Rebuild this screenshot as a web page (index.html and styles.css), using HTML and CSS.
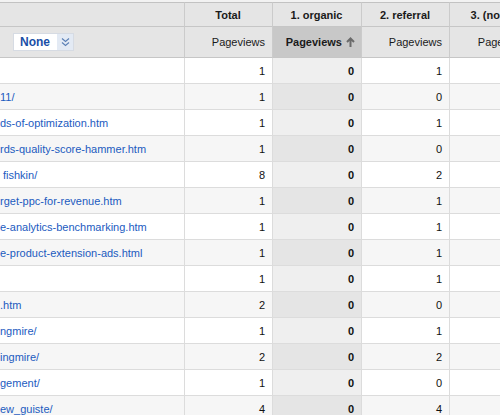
FILE: index.html
```html
<!DOCTYPE html>
<html>
<head>
<meta charset="utf-8">
<link rel="stylesheet" href="styles.css">
</head>
<body>
<div class="wrap">
<table class="grid">
  <colgroup>
    <col class="c-dim"><col class="c-num"><col class="c-num2"><col class="c-num"><col class="c-num2">
  </colgroup>
  <thead>
    <tr class="h1">
      <th class="dim"></th>
      <th>Total</th>
      <th>1. organic</th>
      <th>2. referral</th>
      <th>3. (none)</th>
    </tr>
    <tr class="h2">
      <th class="dim">
        <span class="select"><span class="select-label">None</span><span class="select-btn"><svg width="9" height="10" viewBox="0 0 9 10"><path d="M1 1.5 L4.5 4.5 L8 1.5 M1 5.5 L4.5 8.5 L8 5.5" fill="none" stroke="#5a7fb5" stroke-width="1.1"/></svg></span></span>
      </th>
      <th class="metric">Pageviews</th>
      <th class="metric sorted">Pageviews <svg class="arrow" width="9" height="10" viewBox="0 0 9 10"><path d="M4.5 1.5 V10 M1 5 L4.5 1.5 L8 5" fill="none" stroke="#6a6a6a" stroke-width="2"/></svg></th>
      <th class="metric">Pageviews</th>
      <th class="metric">Pageviews</th>
    </tr>
  </thead>
  <tbody>
    <tr><td class="dim"><a class="link" href="#"></a></td><td>1</td><td class="s">0</td><td>1</td><td>0</td></tr>
    <tr><td class="dim"><a class="link" href="#">11/</a></td><td>1</td><td class="s">0</td><td>0</td><td>1</td></tr>
    <tr><td class="dim"><a class="link" href="#">ds-of-optimization.htm</a></td><td>1</td><td class="s">0</td><td>1</td><td>0</td></tr>
    <tr><td class="dim"><a class="link" href="#">rds-quality-score-hammer.htm</a></td><td>1</td><td class="s">0</td><td>0</td><td>1</td></tr>
    <tr><td class="dim"><a class="link indent" href="#">fishkin/</a></td><td>8</td><td class="s">0</td><td>2</td><td>6</td></tr>
    <tr><td class="dim"><a class="link" href="#">rget-ppc-for-revenue.htm</a></td><td>1</td><td class="s">0</td><td>1</td><td>0</td></tr>
    <tr><td class="dim"><a class="link" href="#">e-analytics-benchmarking.htm</a></td><td>1</td><td class="s">0</td><td>1</td><td>0</td></tr>
    <tr><td class="dim"><a class="link" href="#">e-product-extension-ads.html</a></td><td>1</td><td class="s">0</td><td>1</td><td>0</td></tr>
    <tr><td class="dim"><a class="link" href="#"></a></td><td>1</td><td class="s">0</td><td>1</td><td>0</td></tr>
    <tr><td class="dim"><a class="link" href="#">.htm</a></td><td>2</td><td class="s">0</td><td>0</td><td>2</td></tr>
    <tr><td class="dim"><a class="link" href="#">ngmire/</a></td><td>1</td><td class="s">0</td><td>1</td><td>0</td></tr>
    <tr><td class="dim"><a class="link" href="#">ingmire/</a></td><td>2</td><td class="s">0</td><td>2</td><td>0</td></tr>
    <tr><td class="dim"><a class="link" href="#">gement/</a></td><td>1</td><td class="s">0</td><td>0</td><td>1</td></tr>
    <tr><td class="dim"><a class="link" href="#">ew_guiste/</a></td><td>4</td><td class="s">0</td><td>4</td><td>0</td></tr>
  </tbody>
</table>
</div>
</body>
</html>
```

FILE: styles.css
```css
html, body {
  margin: 0;
  padding: 0;
  background: #f2f2f2;
  overflow: hidden;
}
.wrap {
  width: 500px;
  height: 415px;
  overflow: hidden;
  padding-top: 2px;
}
.grid {
  table-layout: fixed;
  width: 538px;
  border-collapse: separate;
  border-spacing: 0;
  font-family: "Liberation Sans", Arial, sans-serif;
  font-size: 11px;
  color: #222;
}
.c-dim { width: 184px; }
.c-num { width: 88px; }
.c-num2 { width: 89px; }

.grid th, .grid td {
  box-sizing: border-box;
  padding: 0 7px 0 6px;
  white-space: nowrap;
  overflow: hidden;
  border-bottom: 1px solid #dcdcdc;
  border-left: 1px solid #dcdcdc;
}
.grid th.dim, .grid td.dim {
  border-left: none;
  padding-left: 0;
  text-align: left;
}
.grid thead th {
  background: #e5e5e5;
  border-left-color: #cbcbcb;
  border-bottom-color: #c6c6c6;
}
.h1 th {
  height: 25px;
  border-top: 1px solid #c2c2c2;
  font-weight: bold;
  text-align: center;
  color: #1a1a1a;
}
.h2 th {
  height: 31px;
  font-weight: normal;
  text-align: right;
}
.h2 th.metric {
  color: #1a1a1a;
}
.h2 th.sorted {
  background: #c8c8c8;
  font-weight: bold;
  padding-right: 6px;
}
.arrow {
  vertical-align: -1px;
  margin-left: 1px;
}
.select {
  display: inline-flex;
  align-items: stretch;
  margin-left: 13px;
  height: 18px;
  box-sizing: border-box;
  border: 1px solid #d6dbe3;
  background: #fff;
  vertical-align: middle;
}
.select-label {
  display: flex;
  align-items: center;
  padding: 0 7px 0 6px;
  font-size: 12px;
  font-weight: bold;
  color: #1a4fa6;
}
.select-btn {
  display: flex;
  align-items: center;
  justify-content: center;
  width: 16px;
  background: #e3eaf4;
}
.grid tbody td {
  height: 26px;
  background: #fff;
  text-align: right;
  color: #111;
}
.grid tbody tr:nth-child(even) td {
  background: #f6f6f6;
}
.grid tbody td.s {
  background: #efefef;
  font-weight: bold;
}
.grid tbody tr:nth-child(even) td.s {
  background: #e5e5e5;
}
.link {
  color: #1c5bbf;
  text-decoration: none;
}
.indent {
  padding-left: 3px;
}
```
